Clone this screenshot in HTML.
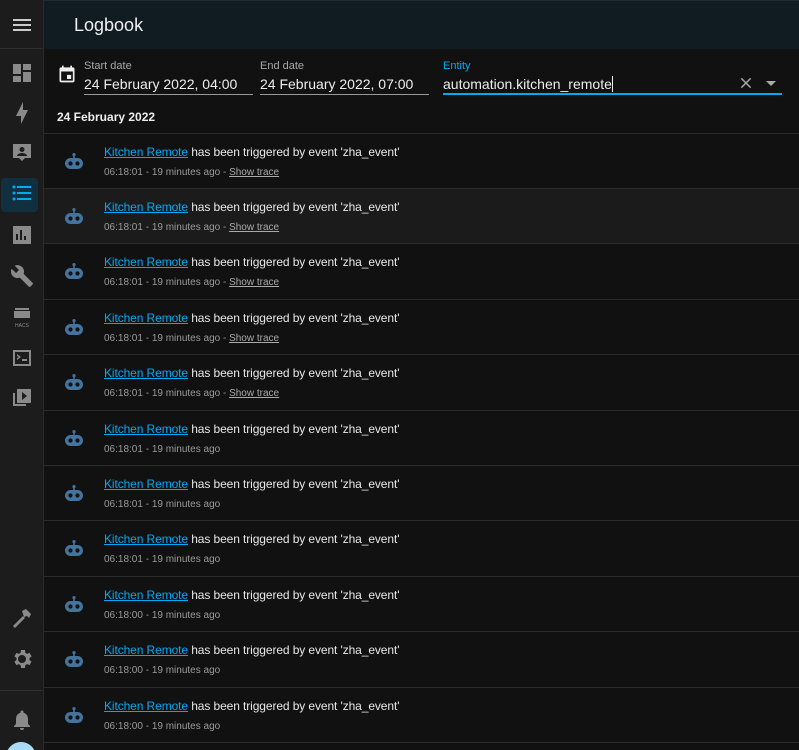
<!DOCTYPE html>
<html style="width:799px;height:750px;overflow:hidden"><head><meta charset="utf-8"><style>
*{margin:0;padding:0;box-sizing:border-box}
body{width:799px;height:750px;overflow:hidden;background:#111;font-family:"Liberation Sans",Roboto,sans-serif;color:#e1e1e1;position:relative}
.sb{position:absolute;left:0;top:0;width:44px;height:750px;background:#1c1c1c;border-right:1px solid #2a2a2a;overflow:hidden}
.sb .top{height:49px;border-bottom:1px solid #2e2e2e}
.ic{position:absolute;left:10px;width:24px;height:24px}
.sel{position:absolute;left:1px;top:178px;width:37px;height:34px;background:#10303f;border-radius:4px}
.hdr{position:absolute;left:44px;top:0;right:0;height:49px;background:#101c22;border-top:1px solid #1e2a30}
.hdr span{position:absolute;left:30px;top:14px;font-size:18px;color:#f0f0f0}
.lbl{position:absolute;font-size:11px;color:#a8a8a8}
.val{position:absolute;font-size:14px;color:#eee}
.ul{position:absolute;height:1px;background:#9a9a9a}
.row{position:absolute;left:44px;right:0;height:56px;border-top:1px solid #2a2a2a}
.row .t{position:absolute;left:60px;top:11px;font-size:12px;color:#e8e8e8;letter-spacing:-0.1px}
.row .t a{color:#03a9f4;text-decoration:underline}
.row .s{position:absolute;left:60px;top:33px;font-size:10px;color:#9b9b9b}
.row .s u{color:#aaa}
.row svg{position:absolute;left:20px;top:19px}
</style></head><body>
<div class="sb"><div class="top"></div>
<svg class="ic" style="top:13px" viewBox="0 0 24 24"><path d="M3 6h18v2H3zM3 11h18v2H3zM3 16h18v2H3z" fill="#ccc"/></svg>
<svg class="ic" style="top:61px" viewBox="0 0 24 24"><path d="M13 3v6h8V3M13 21h8V11h-8M3 21h8v-6H3m0-2h8V3H3v10z" fill="#8a8a8a"/></svg>
<svg class="ic" style="top:101px" viewBox="0 0 24 24"><path d="M11 15H6l7-14v8h5l-7 14v-8z" fill="#8a8a8a"/></svg>
<svg class="ic" style="top:141px" viewBox="0 0 24 24"><path d="M3 3h18v14h-6l-3 3-3-3H3zM12 6a2.5 2.5 0 1 0 0 5 2.5 2.5 0 0 0 0-5zM7 15h10c0-2-3-3-5-3s-5 1-5 3z" fill="#8a8a8a" fill-rule="evenodd"/></svg>
<div class="sel"></div>
<svg class="ic" style="top:181px" viewBox="0 0 24 24"><path d="M7 5h14v2H7zM7 11h14v2H7zM7 17h14v2H7z" fill="#03a9f4"/><circle cx="4" cy="6" r="1.5" fill="#03a9f4"/><circle cx="4" cy="12" r="1.5" fill="#03a9f4"/><circle cx="4" cy="18" r="1.5" fill="#03a9f4"/></svg>
<svg class="ic" style="top:223px" viewBox="0 0 24 24"><path d="M3 3h18v18H3zM6 11v6h2v-6zm4-4v10h2V7zm4 6v4h2v-4z" fill="#8a8a8a" fill-rule="evenodd"/></svg>
<svg class="ic" style="top:264px" viewBox="0 0 24 24"><path d="M22.7 19l-9.1-9.1c.9-2.3.4-5-1.5-6.9-2-2-5-2.4-7.4-1.3L9 6 6 9 1.6 4.7C.4 7.1.9 10.1 2.9 12.1c1.9 1.9 4.6 2.4 6.9 1.5l9.1 9.1c.4.4 1 .4 1.4 0l2.3-2.3c.5-.4.5-1.1.1-1.4z" fill="#8a8a8a"/></svg>
<svg class="ic" style="top:305px" viewBox="0 0 24 24"><path d="M5 3h14v2H5zM4 6h16v7H4z" fill="#8a8a8a"/><text x="12" y="22" font-size="5" fill="#8a8a8a" text-anchor="middle" font-family="Liberation Sans">HACS</text></svg>
<svg class="ic" style="top:346px" viewBox="0 0 24 24"><path d="M3 4h18v16H3zm2 2v12h14V6zm2 2l4 3-4 3v-2l2-1-2-1zm5 5h5v2h-5z" fill="#8a8a8a" fill-rule="evenodd"/></svg>
<svg class="ic" style="top:386px" viewBox="0 0 24 24"><path d="M3 7v13h13v-2H5V7zm4-4h14v14H7zm5 3v8l5-4z" fill="#8a8a8a" fill-rule="evenodd"/></svg>
<svg class="ic" style="top:606px" viewBox="0 0 24 24"><path d="M3 20l10-10 2 2L5 22zM12 5l4-2 5 5-2 4-2-2-3 1-1-3z" fill="#8a8a8a"/></svg>
<svg class="ic" style="top:647px" viewBox="0 0 24 24"><path d="M12 8a4 4 0 1 0 0 8 4 4 0 0 0 0-8zm7.4 5l2.1 1.6-2 3.5-2.5-1a8 8 0 0 1-1.7 1L15 21h-4l-.4-2.9a8 8 0 0 1-1.7-1l-2.5 1-2-3.5L6.5 13a8 8 0 0 1 0-2L4.4 9.4l2-3.5 2.5 1a8 8 0 0 1 1.7-1L11 3h4l.4 2.9a8 8 0 0 1 1.7 1l2.5-1 2 3.5-2.1 1.6a8 8 0 0 1 0 2z" fill="#8a8a8a" fill-rule="evenodd"/></svg>
<div style="position:absolute;left:0;top:690px;width:43px;height:1px;background:#2e2e2e"></div>
<svg class="ic" style="top:708px" viewBox="0 0 24 24"><path d="M12 22a2 2 0 0 0 2-2h-4a2 2 0 0 0 2 2zm6-6v-5c0-3-1.6-5.6-4.5-6.3V4a1.5 1.5 0 0 0-3 0v.7C7.6 5.4 6 8 6 11v5l-2 2v1h16v-1z" fill="#8a8a8a"/></svg>
<div style="position:absolute;left:6px;top:742px;width:30px;height:30px;border-radius:50%;background:#a8dcf4"></div>
</div>
<div class="hdr"><span>Logbook</span></div>
<svg style="position:absolute;left:57px;top:64px" width="20" height="20" viewBox="0 0 24 24"><path d="M19 4h-1V2h-2v2H8V2H6v2H5a2 2 0 0 0-2 2v14a2 2 0 0 0 2 2h14a2 2 0 0 0 2-2V6a2 2 0 0 0-2-2zm0 16H5V9h14zM12 13h5v5h-5z" fill="#eee"/></svg>
<div class="lbl" style="left:84px;top:60px">Start date</div>
<div class="val" style="left:84px;top:76px">24 February 2022, 04:00</div>
<div class="ul" style="left:84px;top:94px;width:169px"></div>
<div class="lbl" style="left:260px;top:60px">End date</div>
<div class="val" style="left:260px;top:76px">24 February 2022, 07:00</div>
<div class="ul" style="left:260px;top:94px;width:169px"></div>
<div class="lbl" style="left:443px;top:60px;color:#03a9f4">Entity</div>
<div class="val" style="left:443px;top:76px">automation.kitchen_remote<span style="display:inline-block;width:1px;height:16px;background:#eee;vertical-align:-3px"></span></div>
<div style="position:absolute;left:443px;top:93px;width:339px;height:2px;background:#03a9f4"></div>
<svg style="position:absolute;left:738px;top:75px" width="16" height="16" viewBox="0 0 24 24"><path d="M5 5l14 14M19 5L5 19" stroke="#aaa" stroke-width="2.2"/></svg>
<div style="position:absolute;left:766px;top:81px;border:5px solid transparent;border-top-color:#aaa"></div>
<div style="position:absolute;left:57px;top:110px;font-size:12px;font-weight:bold;color:#eee">24 February 2022</div>
<div id="rows" style="position:absolute;left:0;top:0;width:799px;height:750px;overflow:hidden"></div>
<script>
var tops=[133,188,243,299,354,410,465,520,576,631,687,742];
var h='';
tops.forEach(function(t,i){
var time=i<8?'06:18:01':'06:18:00';
h+='<div class="row" style="top:'+t+'px;'+(i==1?'background:#1b1b1b':'')+'"><svg width="20" height="17" viewBox="0 0 20 17"><rect x="9.2" y="1" width="1.6" height="4" fill="#44739e"/><circle cx="10" cy="1.6" r="1.6" fill="#44739e"/><rect x="1" y="5" width="18" height="11" rx="5.5" fill="#44739e"/><circle cx="6.5" cy="10.5" r="2.1" fill="#111"/><circle cx="13.5" cy="10.5" r="2.1" fill="#111"/></svg><div class="t"><a>Kitchen Remote</a> has been triggered by event \'zha_event\'</div><div class="s">'+time+' - 19 minutes ago'+(i<5?' - <u>Show trace</u>':'')+'</div></div>';
});
document.getElementById('rows').innerHTML=h;
</script>
</body></html>
